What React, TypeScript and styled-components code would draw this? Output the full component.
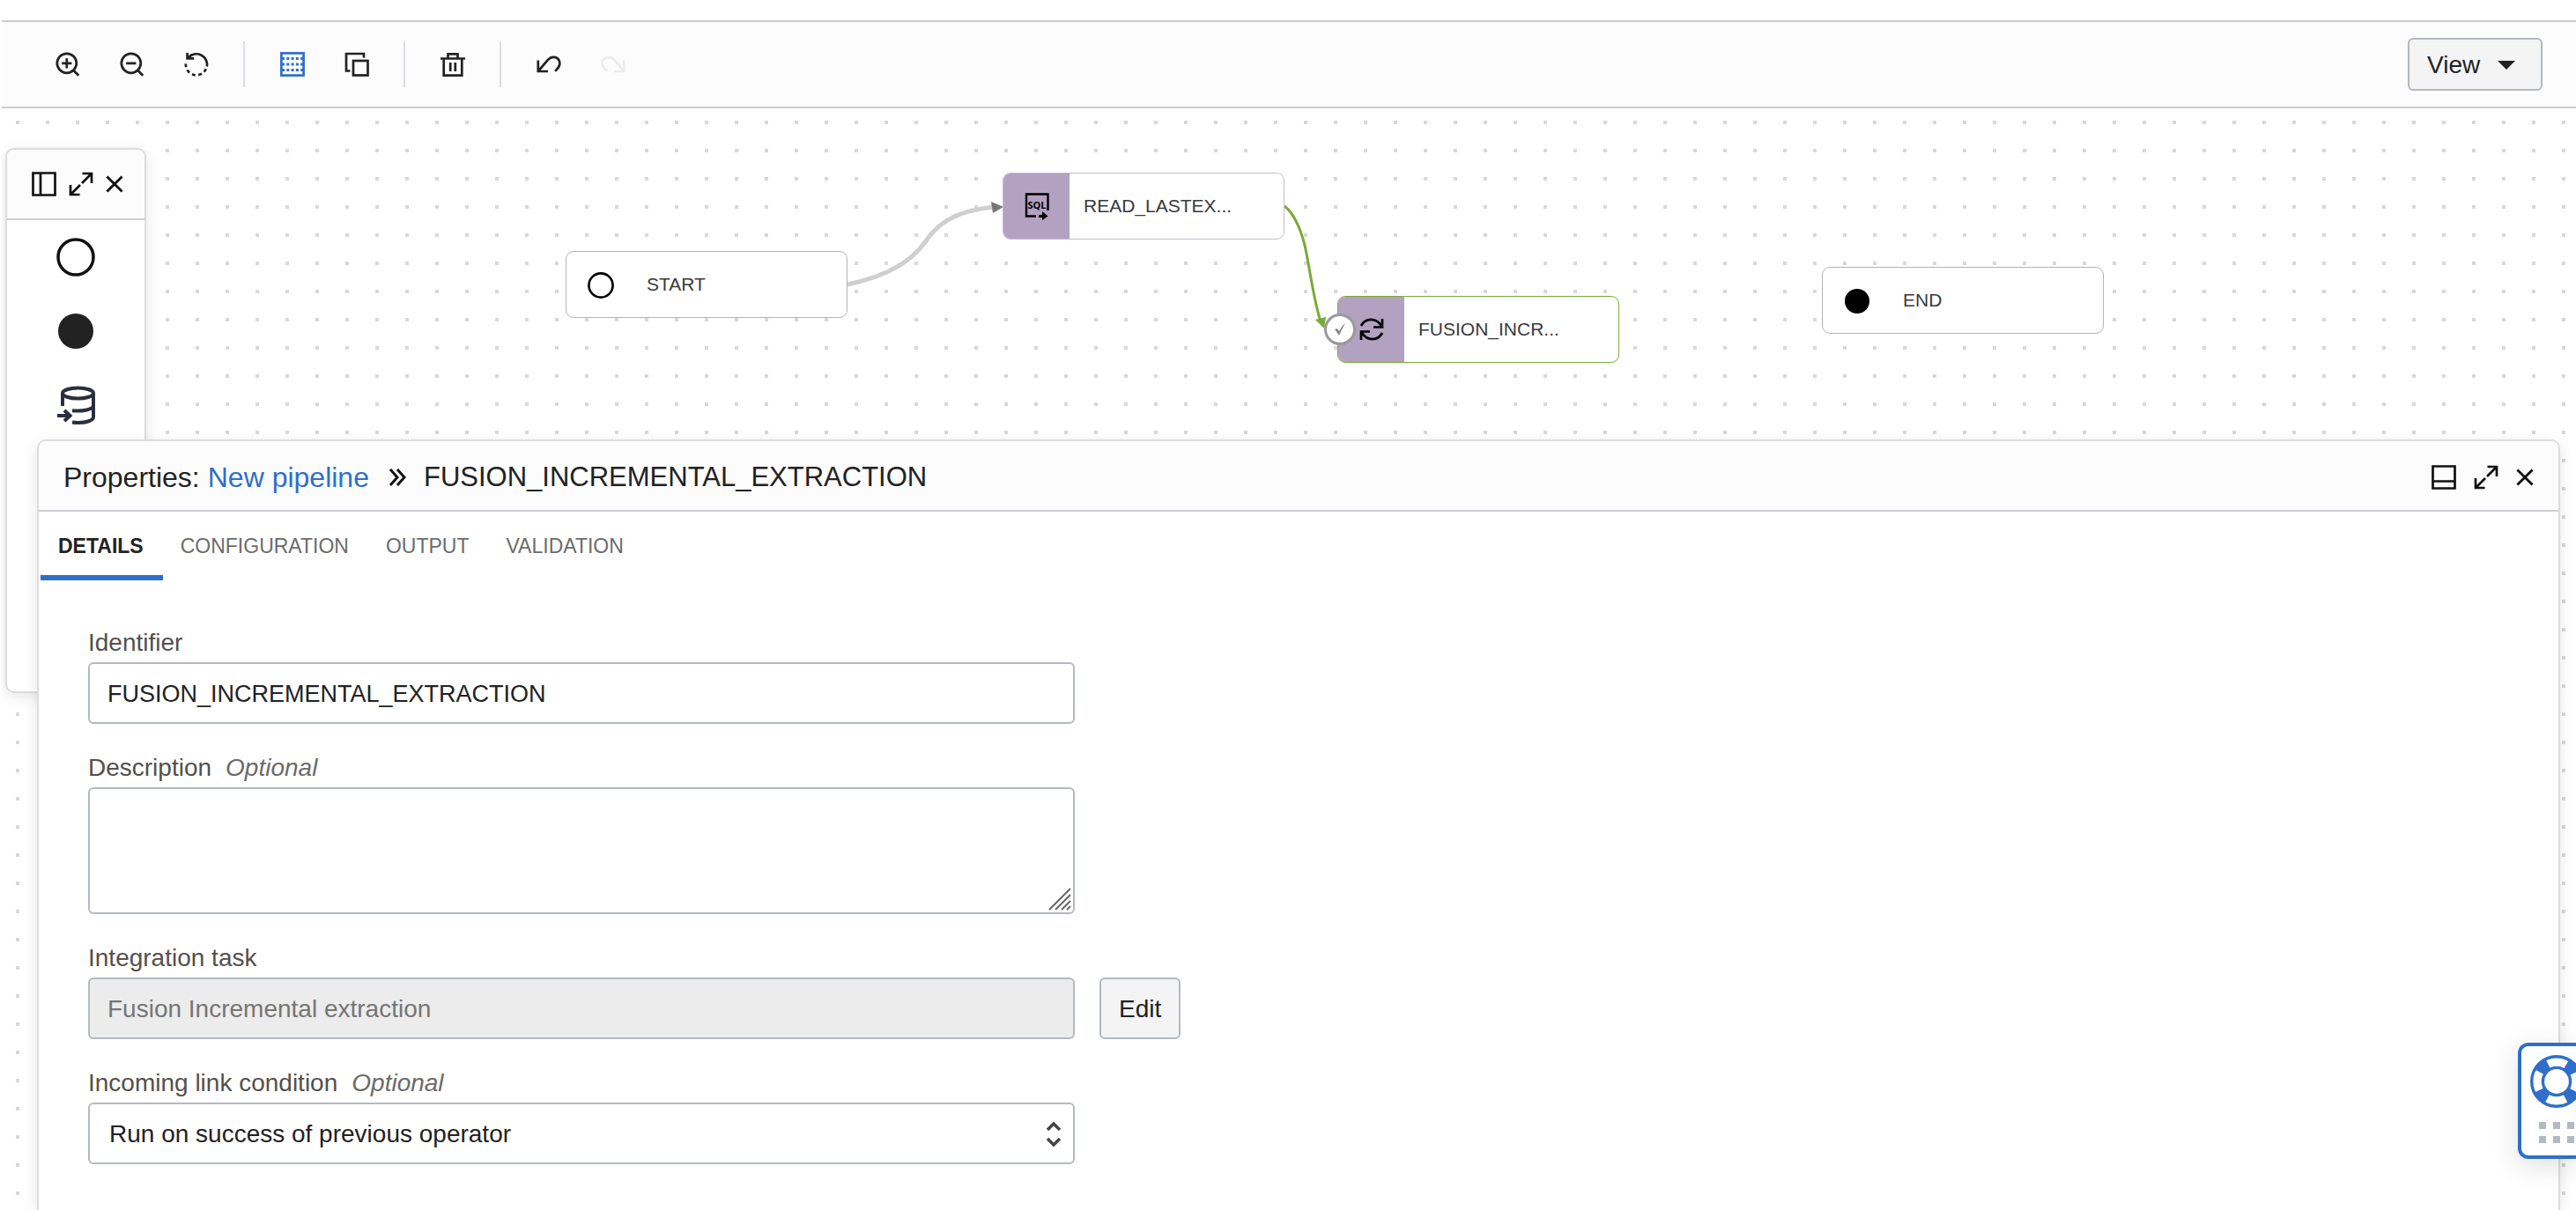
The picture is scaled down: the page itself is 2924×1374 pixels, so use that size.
import React from "react";
import styled, { createGlobalStyle, css } from "styled-components";

const color = {
  text: "#222222",
  muted: "#6b6b6b",
  label: "#55504b",
  blue: "#2f6fc9",
  line: "#cccccc",
  border: "#b4b9c0",
  panelLine: "#dcdcdc",
  headerLine: "#cbcfd4",
  nodeLine: "#b4b4b4",
  purple: "#b3a1c1",
  purpleLine: "#c6b9d4",
  green: "#79ab36",
  bar: "#fcfcfc",
};

const GlobalStyle = createGlobalStyle`
  *, *::before, *::after { box-sizing: border-box; }
  body { margin: 0; background: #ffffff; }
  body, button, input, textarea, select {
    font-family: "Liberation Sans", Arial, sans-serif;
    color: ${color.text};
  }
`;

const Page = styled.div`
  display: flex;
  flex-direction: column;
  height: 100vh;
  padding: 23px 0 0 2px;
  overflow: hidden;
`;

const Toolbar = styled.header`
  display: flex;
  align-items: center;
  justify-content: space-between;
  flex: none;
  height: 100px;
  padding: 0 38px;
  background: ${color.bar};
  border-top: 2px solid ${color.line};
  border-bottom: 2px solid ${color.line};
`;

const Tools = styled.div`
  display: flex;
  align-items: center;
`;

const ToolButton = styled.button<{ $active?: boolean }>`
  display: flex;
  align-items: center;
  justify-content: center;
  width: 73px;
  height: 52px;
  padding: 0;
  border: 0;
  background: none;
  color: ${(p) => (p.$active ? color.blue : color.text)};
  &:disabled { color: #ececec; }
`;

const Separator = styled.span`
  width: 2px;
  height: 52px;
  margin: 0 17px;
  background: #d6dee5;
`;

const Button = styled.button`
  display: flex;
  align-items: center;
  padding: 2px 20px 0;
  border: 2px solid ${color.border};
  border-radius: 6px;
  background: #f4f4f4;
  font-size: 28px;
  line-height: 32px;
`;

const ViewButton = styled(Button)`
  gap: 20px;
  width: 153px;
  height: 60px;
`;

const Caret = styled.span`
  border: 10px solid transparent;
  border-top-color: ${color.text};
  border-bottom: 0;
`;

const Workspace = styled.main`
  position: relative;
  flex: 1;
  overflow: hidden;
  background-image: conic-gradient(from 90deg at 30px 28px, #d8d8d8 25%, transparent 0);
  background-size: 34px 32px;
  background-position: 20px 18px;
`;

const Links = styled.svg`
  position: absolute;
  inset: 0;
  width: 100%;
  height: 100%;
`;

const Node = styled.article<{ $x: number; $y: number; $border: string }>`
  position: absolute;
  left: ${(p) => p.$x}px;
  top: ${(p) => p.$y}px;
  display: flex;
  width: 320px;
  height: 76px;
  border: 1px solid ${(p) => p.$border};
  border-radius: 9px;
  background: #ffffff;
`;

const NodeIcon = styled.div<{ $filled?: boolean }>`
  display: flex;
  align-items: center;
  justify-content: center;
  flex: none;
  width: ${(p) => (p.$filled ? 75 : 77)}px;
  border-radius: 8px 0 0 8px;
  color: #000000;
  ${(p) => p.$filled && css`background: ${color.purple};`}
`;

const NodeName = styled.span<{ $wide?: boolean }>`
  align-self: center;
  padding-left: ${(p) => (p.$wide ? 14 : 16)}px;
  font-size: 21px;
  line-height: 24px;
  color: #3a3a3a;
`;

const StatusBadge = styled.span`
  position: absolute;
  left: -16px;
  top: 19px;
  display: flex;
  align-items: center;
  justify-content: center;
  width: 36px;
  height: 36px;
  border: 3px solid #999999;
  border-radius: 50%;
  background: #ffffff;
`;

const panel = css`
  position: absolute;
  display: flex;
  flex-direction: column;
  border: 2px solid ${color.panelLine};
  background: #ffffff;
  box-shadow: 0 4px 16px rgba(0, 0, 0, 0.1);
`;

const Palette = styled.aside`
  ${panel}
  left: 4px;
  top: 45px;
  width: 160px;
  height: 619px;
  border-radius: 10px;
`;

const PaletteHeader = styled.div`
  display: flex;
  align-items: center;
  justify-content: center;
  gap: 14px;
  height: 80px;
  padding-left: 4px;
  border-bottom: 2px solid ${color.headerLine};
  border-radius: 8px 8px 0 0;
  background: ${color.bar};
`;

const PaletteList = styled.div`
  display: flex;
  flex-direction: column;
  align-items: center;
`;

const IconButton = styled.button`
  display: flex;
  align-items: center;
  justify-content: center;
  padding: 0;
  border: 0;
  background: none;
  color: #111111;
`;

const PaletteItem = styled(IconButton)`
  width: 100%;
  height: 84px;
`;

const Properties = styled.section`
  ${panel}
  left: 40px;
  right: 18px;
  top: 376px;
  bottom: 0;
  border-bottom: 0;
  border-radius: 10px 10px 0 0;
`;

const PropertiesHeader = styled.div`
  display: flex;
  align-items: center;
  justify-content: space-between;
  flex: none;
  height: 80px;
  padding: 4px 28px 0;
  border-bottom: 2px solid ${color.headerLine};
  border-radius: 8px 8px 0 0;
  background: ${color.bar};
`;

const Title = styled.h1`
  display: flex;
  align-items: center;
  margin: 0;
  font-size: 32px;
  font-weight: 400;
  line-height: 36px;
`;

const Crumb = styled.a`
  margin: 0 22px 0 9px;
  color: ${color.blue};
  text-decoration: none;
`;

const CrumbName = styled.span`
  padding-left: 20px;
  font-size: 31px;
`;

const WindowTools = styled.div`
  display: flex;
  align-items: center;
  gap: 20px;
`;

const Tabs = styled.div`
  display: flex;
  flex: none;
  height: 78px;
  padding-left: 2px;
`;

const Tab = styled.button<{ $active?: boolean }>`
  padding: 6px 22px 0 20px;
  border: 0;
  border-bottom: 6px solid ${(p) => (p.$active ? color.blue : "transparent")};
  background: none;
  font-size: 23px;
  font-weight: ${(p) => (p.$active ? 700 : 400)};
  line-height: 28px;
  color: ${(p) => (p.$active ? color.text : color.muted)};
`;

const Form = styled.form`
  display: flex;
  flex-direction: column;
  gap: 34px;
  padding: 55px 56px 52px;
`;

const Field = styled.div`
  display: flex;
  flex-direction: column;
  gap: 6px;
`;

const Label = styled.label`
  font-size: 28px;
  line-height: 32px;
  color: ${color.label};
`;

const Optional = styled.em`
  margin-left: 16px;
  color: ${color.muted};
`;

const ControlRow = styled.div`
  display: flex;
  gap: 28px;
`;

const ControlBox = styled.div`
  position: relative;
  display: flex;
  width: 1120px;
  max-width: 100%;
`;

const control = css`
  width: 100%;
  height: 70px;
  margin: 0;
  padding: 2px 20px 0;
  border: 2px solid ${color.border};
  border-radius: 6px;
  background: #ffffff;
  font-size: 28px;
  line-height: 32px;
`;

const TextInput = styled.input<{ $caps?: boolean }>`
  ${control}
  ${(p) => p.$caps && css`font-size: 27px;`}
  &:disabled {
    background: #ececec;
    color: #757575;
  }
`;

const TextArea = styled.textarea`
  ${control}
  height: 144px;
  padding: 16px 20px;
  resize: none;
`;

const Select = styled.select`
  ${control}
  padding: 2px 22px 0;
  appearance: none;
`;

const Overlay = styled.svg<{ $right: number; $bottom: number }>`
  position: absolute;
  right: ${(p) => p.$right}px;
  bottom: ${(p) => p.$bottom}px;
  pointer-events: none;
`;

const HelpDock = styled.aside`
  position: fixed;
  right: 0;
  bottom: 58px;
  display: flex;
  flex-direction: column;
  gap: 16px;
  width: 66px;
  height: 132px;
  padding: 10px 0 0 10px;
  border: 4px solid ${color.blue};
  border-right: 0;
  border-radius: 12px 0 0 12px;
  background: #ffffff;
  box-shadow: 0 8px 32px rgba(0, 0, 0, 0.12);
  overflow: hidden;
`;

const HelpButton = styled(IconButton)`
  width: 60px;
  color: ${color.blue};
`;

const Grip = styled.div`
  display: grid;
  grid-template-columns: repeat(3, 8px);
  gap: 8px;
  padding-left: 10px;
`;

const GripDot = styled.span`
  height: 8px;
  background: ${color.border};
`;

type IconProps = { size?: number; children: React.ReactNode };

const Icon = ({ size = 28, children }: IconProps) => (
  <svg width={size} height={size} viewBox="0 0 28 28" fill="none" stroke="currentColor" strokeWidth="2.7" aria-hidden="true">
    {children}
  </svg>
);

const ZoomInIcon = () => (
  <Icon>
    <circle cx="12.8" cy="12.8" r="11" />
    <path d="M20 20.5l6.3 6.3M12.8 7.2v11.2M7.2 12.8h11.2" />
  </Icon>
);

const ZoomOutIcon = () => (
  <Icon>
    <circle cx="12.8" cy="12.8" r="11" />
    <path d="M20 20.5l6.3 6.3M7.2 12.8h11.2" />
  </Icon>
);

const ResetIcon = () => (
  <Icon>
    <path d="M4.8 6.6A12 12 0 0 1 25.8 16.6" />
    <path d="M3.6 1v6.4H11.200M4 7l5-4" />
    <path d="M24.8 19.2A12 12 0 0 1 1.900 13" strokeDasharray="4 3.400" />
  </Icon>
);

const GridIcon = () => (
  <Icon>
    <rect x="1.4" y="1.4" width="25.2" height="25.2" />
    <path d="M2 7.5h24M2 14h24M2 20.500h24" strokeWidth="2.900" strokeDasharray="3 2.300" />
  </Icon>
);

const CopyIcon = () => (
  <Icon>
    <path d="M6.5 21.500H2V2h20v4.500" />
    <rect x="10" y="10" width="16.5" height="16.5" />
  </Icon>
);

const TrashIcon = () => (
  <Icon>
    <path d="M0 7.500h28M8.500 7V2.300h11V7M3.700 8v18.700h20.600V8M11.200 12v10M16.800 12v10" />
  </Icon>
);

const UndoIcon = () => (
  <Icon>
    <path d="M1.8 9.500v12.500H13M2.200 21.500L13 9C16 5.200 22 4.600 25 8.600C27.600 12.600 26 17.500 21 21.800" />
  </Icon>
);

const RedoIcon = () => (
  <Icon>
    <path d="M26.2 9.500v12.500H15M25.800 21.500L15 9C12 5.200 6 4.600 3 8.600C.4 12.600 2 17.500 7 21.800" />
  </Icon>
);

const DockLeftIcon = () => (
  <Icon>
    <path d="M1.500 1.500h25v25h-25zM10 1.500v25" />
  </Icon>
);

const DockBottomIcon = () => (
  <Icon>
    <path d="M1.500 1.500h25v25h-25zM1.500 18.500h25" />
  </Icon>
);

const ExpandIcon = () => (
  <Icon>
    <path d="M15.500 2H26v11M26 2L15 13M2 15v11h10.500M2 26l11-11" />
  </Icon>
);

const CloseIcon = () => (
  <Icon size={20}>
    <path d="M2 2l24 24M26 2L2 26" strokeWidth="4" />
  </Icon>
);

const DatabaseIcon = () => (
  <svg width="44" height="44" viewBox="0 0 44 44" fill="none" stroke="#2a2f3d" strokeWidth="4" aria-hidden="true">
    <ellipse cx="24.500" cy="8.500" rx="17.500" ry="6" />
    <path d="M7 8.500V23M42 8.500V35.500C42 39.500 34 42 24.500 42C22 42 20 41.800 18 41.500M18 28.300C30 29.300 42 27 42 22.300" />
    <path d="M1 34H15M9 28L15.500 34L9 40" />
  </svg>
);

const SqlIcon = () => (
  <svg width="28" height="32" viewBox="0 0 28 32" fill="none" stroke="currentColor" strokeWidth="2.400" aria-hidden="true">
    <path d="M26.500 21V2.500H2V27.500H13" />
    <path d="M16 27.500H21" strokeWidth="3" />
    <path d="M20 22l6.500 5.500-6.500 4.500z" fill="currentColor" stroke="none" />
    <text x="14" y="18.500" textAnchor="middle" fontFamily="Open Sans, sans-serif" fontSize="11" fontWeight="700" fill="currentColor" stroke="none">
      SQL
    </text>
  </svg>
);

const SyncIcon = () => (
  <Icon>
    <path d="M2 10C7 .5 19 .5 25 10M26 2v9.500H16M26 18C21 27.500 9 27.500 3 18M2 26v-9.500h10" />
  </Icon>
);

const LifeRingIcon = () => (
  <svg width="60" height="60" viewBox="0 0 60 60" fill="none" stroke="currentColor" aria-hidden="true">
    <circle cx="30" cy="30" r="22.500" strokeWidth="14" strokeDasharray="13.400 21.943" strokeDashoffset="-10.970" />
    <circle cx="30" cy="30" r="28.300" strokeWidth="3.400" />
    <circle cx="30" cy="30" r="15.600" strokeWidth="3.400" />
  </svg>
);

const RaquoIcon = () => (
  <svg width="20" height="20" viewBox="0 0 20 20" fill="none" stroke="#111111" strokeWidth="2.900" aria-hidden="true">
    <path d="M2 1l8 9-8 9M10 1l8 9-8 9" />
  </svg>
);

export default function App() {
  return (
    <>
      <GlobalStyle />
      <Page>
        <Toolbar>
          <Tools>
            <ToolButton aria-label="Zoom in"><ZoomInIcon /></ToolButton>
            <ToolButton aria-label="Zoom out"><ZoomOutIcon /></ToolButton>
            <ToolButton aria-label="Reset zoom"><ResetIcon /></ToolButton>
            <Separator />
            <ToolButton aria-label="Show grid" $active><GridIcon /></ToolButton>
            <ToolButton aria-label="Duplicate"><CopyIcon /></ToolButton>
            <Separator />
            <ToolButton aria-label="Delete"><TrashIcon /></ToolButton>
            <Separator />
            <ToolButton aria-label="Undo"><UndoIcon /></ToolButton>
            <ToolButton aria-label="Redo" disabled><RedoIcon /></ToolButton>
          </Tools>
          <ViewButton>View<Caret /></ViewButton>
        </Toolbar>

        <Workspace>
          <Links aria-hidden="true">
            <path d="M960 200C1000 192 1030 177 1048 152C1066 125 1090 116 1126 112" fill="none" stroke="#cfcfcf" strokeWidth="5" />
            <path d="M1123 106l14 6-12 7z" fill="#777777" />
            <path d="M1456 111C1468 120 1477 143 1481 165C1487 197 1490 220 1497 242" fill="none" stroke={color.green} strokeWidth="3" />
            <path d="M1491 240l12-3-2 13z" fill={color.green} />
          </Links>

          <Node $x={640} $y={162} $border={color.nodeLine}>
            <NodeIcon>
              <svg width="32" height="32" viewBox="0 0 32 32" aria-hidden="true">
                <circle cx="16" cy="17" r="13.6" fill="none" stroke="#000000" strokeWidth="2.6" />
              </svg>
            </NodeIcon>
            <NodeName $wide>START</NodeName>
          </Node>
          <Node $x={1136} $y={73} $border={color.purpleLine}>
            <NodeIcon $filled><SqlIcon /></NodeIcon>
            <NodeName>READ_LASTEX...</NodeName>
          </Node>
          <Node $x={1516} $y={213} $border={color.green}>
            <NodeIcon $filled><SyncIcon /></NodeIcon>
            <NodeName>FUSION_INCR...</NodeName>
            <StatusBadge>
              <svg width="14" height="16" viewBox="0 0 14 16" aria-hidden="true">
                <path d="M1 8l3-1 2 3Q9 4 13 1Q9 8 6 15z" fill="#888888" />
              </svg>
            </StatusBadge>
          </Node>
          <Node $x={2066} $y={180} $border={color.nodeLine}>
            <NodeIcon>
              <svg width="32" height="32" viewBox="0 0 32 32" aria-hidden="true">
                <circle cx="16" cy="17" r="14" fill="#000000" />
              </svg>
            </NodeIcon>
            <NodeName $wide>END</NodeName>
          </Node>

          <Palette aria-label="Operators">
            <PaletteHeader>
              <IconButton aria-label="Dock left"><DockLeftIcon /></IconButton>
              <IconButton aria-label="Expand operators"><ExpandIcon /></IconButton>
              <IconButton aria-label="Close operators"><CloseIcon /></IconButton>
            </PaletteHeader>
            <PaletteList>
              <PaletteItem aria-label="Start operator">
                <svg width="44" height="44" viewBox="0 0 44 44" aria-hidden="true">
                  <circle cx="22" cy="22" r="20" fill="none" stroke="#111111" strokeWidth="3.5" />
                </svg>
              </PaletteItem>
              <PaletteItem aria-label="End operator">
                <svg width="40" height="40" viewBox="0 0 40 40" aria-hidden="true">
                  <circle cx="20" cy="20" r="20" fill="#222222" />
                </svg>
              </PaletteItem>
              <PaletteItem aria-label="Data loader operator"><DatabaseIcon /></PaletteItem>
            </PaletteList>
          </Palette>

          <Properties>
            <PropertiesHeader>
              <Title>
                Properties:
                <Crumb href="#pipeline">New pipeline</Crumb>
                <RaquoIcon />
                <CrumbName>FUSION_INCREMENTAL_EXTRACTION</CrumbName>
              </Title>
              <WindowTools>
                <IconButton aria-label="Dock bottom"><DockBottomIcon /></IconButton>
                <IconButton aria-label="Expand properties"><ExpandIcon /></IconButton>
                <IconButton aria-label="Close properties"><CloseIcon /></IconButton>
              </WindowTools>
            </PropertiesHeader>
            <Tabs role="tablist">
              <Tab role="tab" aria-selected="true" $active>DETAILS</Tab>
              <Tab role="tab" aria-selected="false">CONFIGURATION</Tab>
              <Tab role="tab" aria-selected="false">OUTPUT</Tab>
              <Tab role="tab" aria-selected="false">VALIDATION</Tab>
            </Tabs>
            <Form>
              <Field>
                <Label htmlFor="identifier">Identifier</Label>
                <ControlBox>
                  <TextInput id="identifier" $caps defaultValue="FUSION_INCREMENTAL_EXTRACTION" />
                </ControlBox>
              </Field>
              <Field>
                <Label htmlFor="description">Description<Optional>Optional</Optional></Label>
                <ControlBox>
                  <TextArea id="description" />
                  <Overlay $right={4} $bottom={4} width="26" height="26" viewBox="0 0 26 26" stroke="#666666" strokeWidth="2" aria-hidden="true">
                    <path d="M1 25L25 1M8 25L25 8M15 25L25 15M21 25L25 21" />
                  </Overlay>
                </ControlBox>
              </Field>
              <Field>
                <Label htmlFor="task">Integration task</Label>
                <ControlRow>
                  <ControlBox>
                    <TextInput id="task" disabled defaultValue="Fusion Incremental extraction" />
                  </ControlBox>
                  <Button type="button">Edit</Button>
                </ControlRow>
              </Field>
              <Field>
                <Label htmlFor="condition">Incoming link condition<Optional>Optional</Optional></Label>
                <ControlBox>
                  <Select id="condition" defaultValue="success">
                    <option value="success">Run on success of previous operator</option>
                    <option value="failure">Run on failure of previous operator</option>
                    <option value="always">Always run</option>
                  </Select>
                  <Overlay $right={15} $bottom={19} width="18" height="30" viewBox="0 0 18 30" fill="none" stroke="#444444" strokeWidth="3.5" aria-hidden="true">
                    <path d="M2 10l7-7 7 7M2 20l7 7 7-7" />
                  </Overlay>
                </ControlBox>
              </Field>
            </Form>
          </Properties>
        </Workspace>

        <HelpDock aria-label="Help">
          <HelpButton aria-label="Open help"><LifeRingIcon /></HelpButton>
          <Grip>
            <GripDot /><GripDot /><GripDot />
            <GripDot /><GripDot /><GripDot />
          </Grip>
        </HelpDock>
      </Page>
    </>
  );
}
